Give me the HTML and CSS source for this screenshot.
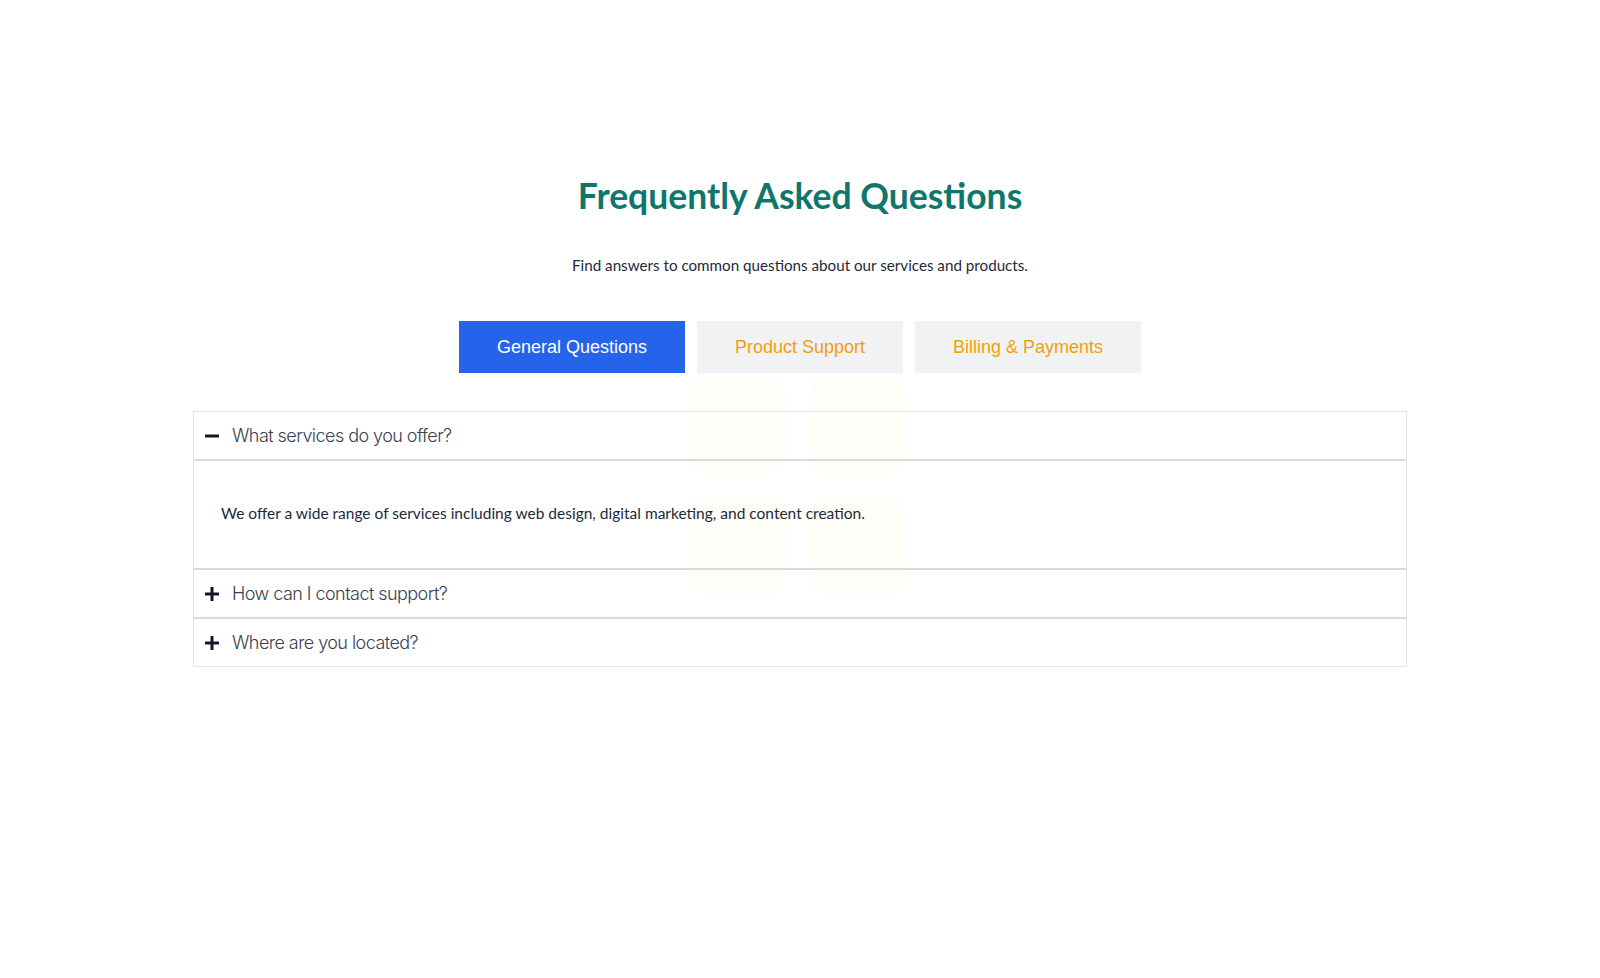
FILE: index.html
```html
<!DOCTYPE html>
<html lang="en">
<head>
<meta charset="utf-8">
<title>FAQ</title>
<link rel="stylesheet" href="styles.css">
</head>
<body>
<div class="page">
  <section class="faq">
    <h1 class="title">Frequently Asked Questions</h1>
    <p class="subtitle">Find answers to common questions about our services and products.</p>
    <div class="tabs">
      <button class="tab tab-active">General Questions</button>
      <button class="tab">Product Support</button>
      <button class="tab">Billing &amp; Payments</button>
    </div>
    <div class="accordion-wrap">
      <div class="blobs">
        <span class="blob"></span><span class="blob"></span>
        <span class="blob"></span><span class="blob"></span>
      </div>
      <div class="accordion">
        <div class="item">
          <div class="question">
            <svg class="icon" viewBox="0 0 14 14" width="14" height="14"><rect x="0" y="5.5" width="14" height="3" rx="0.6" fill="#111827"/></svg>
            <span>What services do you offer?</span>
          </div>
          <div class="answer">We offer a wide range of services including web design, digital marketing, and content creation.</div>
        </div>
        <div class="item">
          <div class="question">
            <svg class="icon" viewBox="0 0 14 14" width="14" height="14"><rect x="0" y="5.5" width="14" height="3" rx="0.6" fill="#111827"/><rect x="5.5" y="0" width="3" height="14" rx="0.6" fill="#111827"/></svg>
            <span>How can I contact support?</span>
          </div>
        </div>
        <div class="item">
          <div class="question">
            <svg class="icon" viewBox="0 0 14 14" width="14" height="14"><rect x="0" y="5.5" width="14" height="3" rx="0.6" fill="#111827"/><rect x="5.5" y="0" width="3" height="14" rx="0.6" fill="#111827"/></svg>
            <span>Where are you located?</span>
          </div>
        </div>
      </div>
    </div>
  </section>
</div>
</body>
</html>
```
FILE: styles.css
```css
html, body {
  margin: 0;
  padding: 0;
  background: #ffffff;
}
.page {
  width: 100%;
  padding-top: 172px;
}
.faq {
  width: 1214px;
  margin: 0 auto;
  display: flex;
  flex-direction: column;
  align-items: center;
}
.title {
  margin: 0;
  font-family: Lato, "Noto Sans", sans-serif;
  font-weight: 700;
  font-size: 35.5px;
  line-height: 48px;
  color: #0f766e;
}
.subtitle {
  margin: 35px 0 0;
  font-family: Lato, "Noto Sans", sans-serif;
  font-size: 15.2px;
  line-height: 20px;
  color: #1f2937;
}
.tabs {
  margin-top: 46px;
  display: flex;
  gap: 12px;
}
.tab {
  height: 52px;
  padding: 0 38px;
  border: none;
  background: #f1f2f4;
  color: #f59e0b;
  font-family: "Liberation Sans", Arial, sans-serif;
  font-size: 18px;
  cursor: pointer;
}
.tab-active {
  background: #2563eb;
  color: #ffffff;
}
.accordion-wrap {
  position: relative;
  width: 100%;
  margin-top: 6px;
  padding-top: 32px;
}
.blobs {
  position: absolute;
  top: -3px;
  left: 495px;
  display: grid;
  grid-template-columns: 97px 97px;
  gap: 24px;
  z-index: 0;
}
.blob {
  width: 97px;
  height: 97px;
  border-radius: 20px;
  background: #fefdf7;
}
.accordion {
  position: relative;
  z-index: 1;
  border: 1px solid #e3e5e8;
}
.item + .item {
  border-top: 2px solid #d7dadf;
}
.question {
  height: 47px;
  display: flex;
  align-items: center;
  gap: 13px;
  padding-left: 11px;
  font-family: Inter, "Noto Sans", sans-serif;
  font-weight: 300;
  font-size: 18px;
  color: #374151;
  letter-spacing: -0.55px;
}
.icon {
  flex: none;
}
.answer {
  border-top: 2px solid #d7dadf;
  padding: 43px 27px 46px;
  font-family: Lato, "Noto Sans", sans-serif;
  font-size: 15.5px;
  line-height: 18px;
  color: #1f2937;
}
```
